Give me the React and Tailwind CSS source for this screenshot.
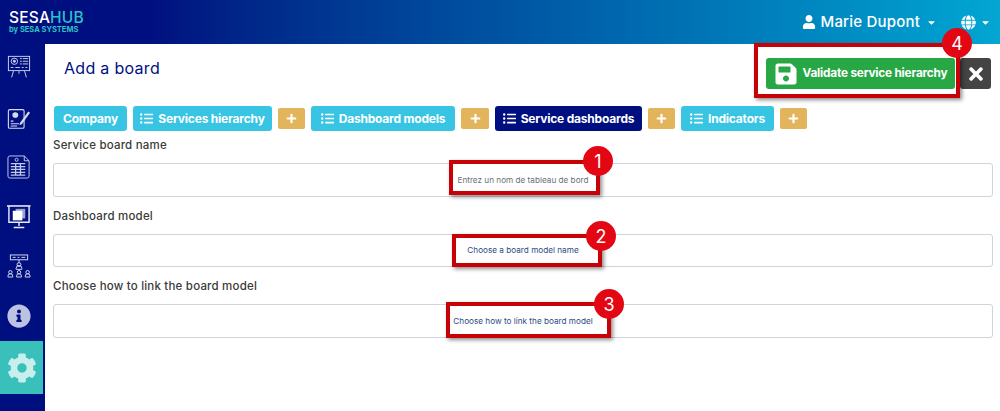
import React from 'react';
import { FaUser, FaGlobe, FaCaretDown, FaTimes, FaInfoCircle, FaCog, FaListUl, FaPlus, FaSave } from 'react-icons/fa';

const BoardIcon = () => (
  <svg width="24" height="25" viewBox="0 0 26 28" preserveAspectRatio="none" fill="none" stroke="#d5d9ef" strokeWidth="1">
    <rect x="1.5" y="1.5" width="23" height="16" />
    <circle cx="8" cy="7" r="3.5" />
    <circle cx="8" cy="7" r="1.2" fill="#d5d9ef" />
    <path d="M14 4h2M17 4h6M14 7h2M17 7h6M14 10h2M17 10h6M4 14h3M9 14h5M16 14h2M20 14h2" />
    <path d="M7 18l-2 7M19 18l2 7M13 18v3" />
  </svg>
);

const ContractIcon = () => (
  <svg width="24" height="23" viewBox="0 0 26 26" preserveAspectRatio="none" fill="none" stroke="#d5d9ef" strokeWidth="1.2">
    <rect x="1.5" y="3" width="17" height="21" rx="1.5" />
    <circle cx="9" cy="9" r="2.6" fill="#d5d9ef" />
    <path d="M4 16h3M4 19h9M4 21.5h7" />
    <path d="M14 18l9-13 2 1.5-9 13-2.5 1z" fill="#d5d9ef" stroke="none" />
  </svg>
);

const TableIcon = () => (
  <svg width="24" height="24" viewBox="0 0 25 25" fill="none" stroke="#c4c9e6" strokeWidth="1">
    <path d="M3 1h15l5 5v16a2 2 0 0 1-2 2H3a2 2 0 0 1-2-2V3a2 2 0 0 1 2-2z" />
    <path d="M18 1v5h5" />
    <circle cx="10" cy="5" r="1.6" />
    <path d="M4 9h15M4 12h15M4 15h15M4 18h15M4 21h15M9 9v12M14 9v12" strokeWidth="1.3" />
  </svg>
);

const ScreenIcon = () => (
  <svg width="24" height="24" viewBox="0 0 25 25" fill="none">
    <path d="M0 1h24.500" stroke="#fff" strokeWidth="1.500" />
    <path d="M2 1v17h21V1M12.500 18v4M7 23.500h11" stroke="#e8eaf6" strokeWidth="1.500" />
    <rect x="9" y="4" width="10" height="10" fill="#9aa2d2" />
    <rect x="6" y="6" width="10" height="10" fill="#fff" />
  </svg>
);

const TreeIcon = () => (
  <svg width="24" height="24" viewBox="0 0 25 25" fill="none" stroke="#d5d9ef" strokeWidth="1">
    <rect x="3.500" y="1" width="18" height="5" />
    <path d="M6 3.500h3M11 3.500h2M15 3.500h4M12.500 6v3" />
    <circle cx="12.500" cy="11" r="2" />
    <path d="M9.500 16v-1a3 3 0 0 1 6 0v1z" />
    <circle cx="3.500" cy="19" r="1.800" />
    <circle cx="12.500" cy="19" r="1.800" />
    <circle cx="21.500" cy="19" r="1.800" />
    <path d="M1 24v-1a2.500 2.500 0 0 1 5 0v1zM10 24v-1a2.500 2.500 0 0 1 5 0v1zM19 24v-1a2.500 2.500 0 0 1 5 0v1z" />
  </svg>
);

const Tab = ({ label, list, active, w }) => (
  <div className={`h-[25px] rounded-[3px] flex items-center justify-center gap-[5px] text-white text-[12px] font-bold tracking-[-0.2px] ${w} ${active ? 'bg-[#000f7f]' : 'bg-[#38c5e3]'}`}>
    {list && <FaListUl className="text-[13px]" />}
    <span>{label}</span>
  </div>
);

const AddBtn = ({ w = 'w-[27px]' }) => (
  <div className={`h-[21px] rounded-[2px] bg-[#e2b45c] flex items-center justify-center text-white text-[11px] ${w}`}>
    <FaPlus />
  </div>
);

const Field = ({ label, placeholder, color, h, mb }) => (
  <div className={mb}>
    <div className="text-[11.500px] font-medium text-[#3a3a3a] leading-[14px] tracking-[0.2px] mb-[11px]">{label}</div>
    <div className={`border border-[#d0d3dc] rounded-[3px] flex items-center justify-center text-[8.200px] ${h} ${color}`}>
      {placeholder}
    </div>
  </div>
);

const Mark = ({ n, box, dot }) => (
  <>
    <div className={`absolute border-[4px] border-[#c80008] shadow-[2px_2px_4px_rgba(0,0,0,0.45)] ${box}`}></div>
    <div className={`absolute w-[30px] h-[30px] rounded-full bg-[#e30613] text-white text-[18px] flex items-center justify-center ${dot}`}>{n}</div>
  </>
);

export default function App() {
  return (
    <div className="relative h-[411px] w-[1000px] overflow-hidden bg-white font-['Inter',sans-serif]">
      <header className="h-[44px] flex items-center justify-between bg-gradient-to-r from-[#000f7f] from-15% to-[#06a6d2] text-white">
        <div className="ml-[9px] mt-[-1px]">
          <div className="text-[15.500px] leading-[15px] font-medium tracking-[0.2px]">
            SESA<span className="text-[#2fc0c4]">HUB</span>
          </div>
          <div className="text-[7.500px] leading-[9px] font-bold text-[#2fc0c4]">by SESA SYSTEMS</div>
        </div>
        <div className="flex items-center mr-[9px]">
          <FaUser className="text-[14px]" />
          <span className="ml-[5px] text-[15px] font-medium tracking-[0.2px]">Marie Dupont</span>
          <FaCaretDown className="ml-[6px] text-[11px]" />
          <FaGlobe className="ml-[24px] text-[15px]" />
          <FaCaretDown className="ml-[4px] text-[11px]" />
        </div>
      </header>

      <div className="flex h-[367px]">
        <aside className="w-[45px] bg-[#000f7f] flex flex-col items-start pt-[11px]">
          <div className="ml-[7px] flex"><BoardIcon /></div>
          <div className="ml-[7px] mt-[27px] flex"><ContractIcon /></div>
          <div className="ml-[7px] mt-[25px] flex"><TableIcon /></div>
          <div className="ml-[7px] mt-[26px] flex"><ScreenIcon /></div>
          <div className="ml-[7px] mt-[25px] flex"><TreeIcon /></div>
          <div className="ml-[7px] mt-[26px] flex text-[24px] text-[#bcc2e2]"><FaInfoCircle /></div>
          <div className="mt-[13px] h-[53px] w-[43px] bg-[#39c0bb] flex items-center justify-center text-[30px] text-[#c9efec]"><FaCog /></div>
        </aside>

        <main className="flex-1 pl-[8px] pr-[7px]">
          <div className="h-[62px] flex items-start justify-between">
            <h1 className="ml-[11px] mt-[14px] text-[16px] leading-[20px] font-normal tracking-[0.3px] text-[#000f7f]">Add a board</h1>
            <div className="flex gap-[5px] mt-[14px] mr-[2px]">
              <div className="w-[189px] h-[31px] rounded-[3px] bg-[#28a745] flex items-center justify-center gap-[5px] text-white text-[11.800px] font-bold tracking-[-0.2px]">
                <FaSave className="text-[24px]" />
                <span>Validate service hierarchy</span>
              </div>
              <div className="w-[31px] h-[31px] rounded-[3px] bg-[#444444] flex items-center justify-center text-white text-[20px]">
                <FaTimes />
              </div>
            </div>
          </div>

          <div className="flex items-center gap-[6px] ml-[1px]">
            <Tab label="Company" w="w-[73px]" />
            <Tab label="Services hierarchy" list w="w-[139px]" />
            <AddBtn />
            <Tab label="Dashboard models" list w="w-[144px]" />
            <AddBtn w="w-[28px]" />
            <Tab label="Service dashboards" list active w="w-[147px]" />
            <AddBtn />
            <Tab label="Indicators" list w="w-[93px]" />
            <AddBtn />
          </div>

          <div className="mt-[7px]">
            <Field label="Service board name" placeholder="Entrez un nom de tableau de bord" color="text-[#6b6f78]" h="h-[34px]" mb="mb-[12px]" />
            <Field label="Dashboard model" placeholder="Choose a board model name" color="text-[#2f4a86]" h="h-[33px]" mb="mb-[12px]" />
            <Field label="Choose how to link the board model" placeholder="Choose how to link the board model" color="text-[#2f4a86]" h="h-[34px]" />
          </div>
        </main>
      </div>

      <Mark n="1" box="left-[449px] top-[160px] w-[151px] h-[35px]" dot="left-[583px] top-[146px]" />
      <Mark n="2" box="left-[452px] top-[234px] w-[150px] h-[33px]" dot="left-[586px] top-[221px]" />
      <Mark n="3" box="left-[446px] top-[302px] w-[165px] h-[36px]" dot="left-[594px] top-[289px]" />
      <Mark n="4" box="left-[754px] top-[43px] w-[206px] h-[55px]" dot="left-[942px] top-[28px]" />
    </div>
  );
}
